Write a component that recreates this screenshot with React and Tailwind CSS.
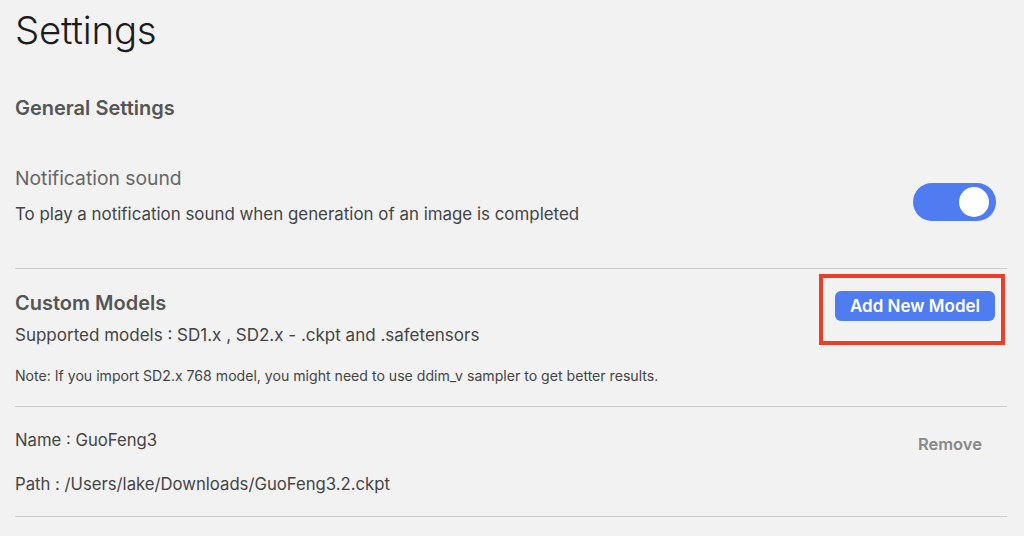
export default function App() {
  return (
    <div
      className="w-[1024px] h-[536px] overflow-hidden bg-[#f2f2f2] text-[#444]"
      style={{ fontFamily: 'Inter, "Noto Sans", sans-serif' }}
    >
      <div className="pl-[15px] pr-[17px]">
        {/* Title */}
        <h1 className="pt-[6px] text-[38.4px] leading-[48px] font-light tracking-[-0.2px] text-[#1c1c1c]">Settings</h1>

        {/* General */}
        <h2 className="mt-[41px] text-[20px] leading-[26px] font-semibold text-[#555]">General Settings</h2>

        <div className="mt-[44px] flex pb-[43px] border-b border-[#cdcdcd]">
          <div className="flex-1">
            <div className="text-[19.3px] leading-[26px] text-[#666]">Notification sound</div>
            <div className="mt-[12px] text-[16.9px] leading-[22px] text-[#444]">
              To play a notification sound when generation of an image is completed
            </div>
          </div>
          <button className="self-start mr-[11px] mt-[18px] w-[83px] h-[38px] rounded-full bg-[#4f7cf1] flex items-center justify-end pr-[7px]">
            <span className="w-[30px] h-[30px] rounded-full bg-white block" />
          </button>
        </div>

        {/* Custom models */}
        <div className="flex pb-[21px] border-b border-[#cdcdcd]">
          <div className="flex-1 pt-[21px]">
            <h2 className="text-[20px] leading-[26px] font-semibold text-[#555]">Custom Models</h2>
            <div className="mt-[8px] text-[17px] leading-[22px] text-[#444]">
              Supported models : SD1.x , SD2.x - .ckpt and .safetensors
            </div>
            <div className="mt-[21px] text-[14.1px] leading-[18px] text-[#444]">
              Note: If you import SD2.x 768 model, you might need to use ddim_v sampler to get better results.
            </div>
          </div>
          <div className="self-start mt-[5px] mr-[2px] w-[186px] h-[71px] border-4 border-[#e8402a] flex justify-end items-start pt-[13px] pr-[6px]">
            <button className="w-[160px] h-[30px] rounded-[6px] bg-[#4f7cf1] text-white text-[17px] font-semibold leading-none">
              Add New Model
            </button>
          </div>
        </div>

        {/* Model entry */}
        <div className="flex pt-[22px] pb-[21px] border-b border-[#cdcdcd]">
          <div className="flex-1 text-[16.7px] leading-[22px] text-[#444]">
            <div>Name : GuoFeng3</div>
            <div className="mt-[22px]">Path : /Users/lake/Downloads/GuoFeng3.2.ckpt</div>
          </div>
          <button className="mr-[25px] mt-[4px] self-start text-[16.5px] leading-[22px] font-semibold text-[#888]">Remove</button>
        </div>
      </div>
    </div>
  );
}
